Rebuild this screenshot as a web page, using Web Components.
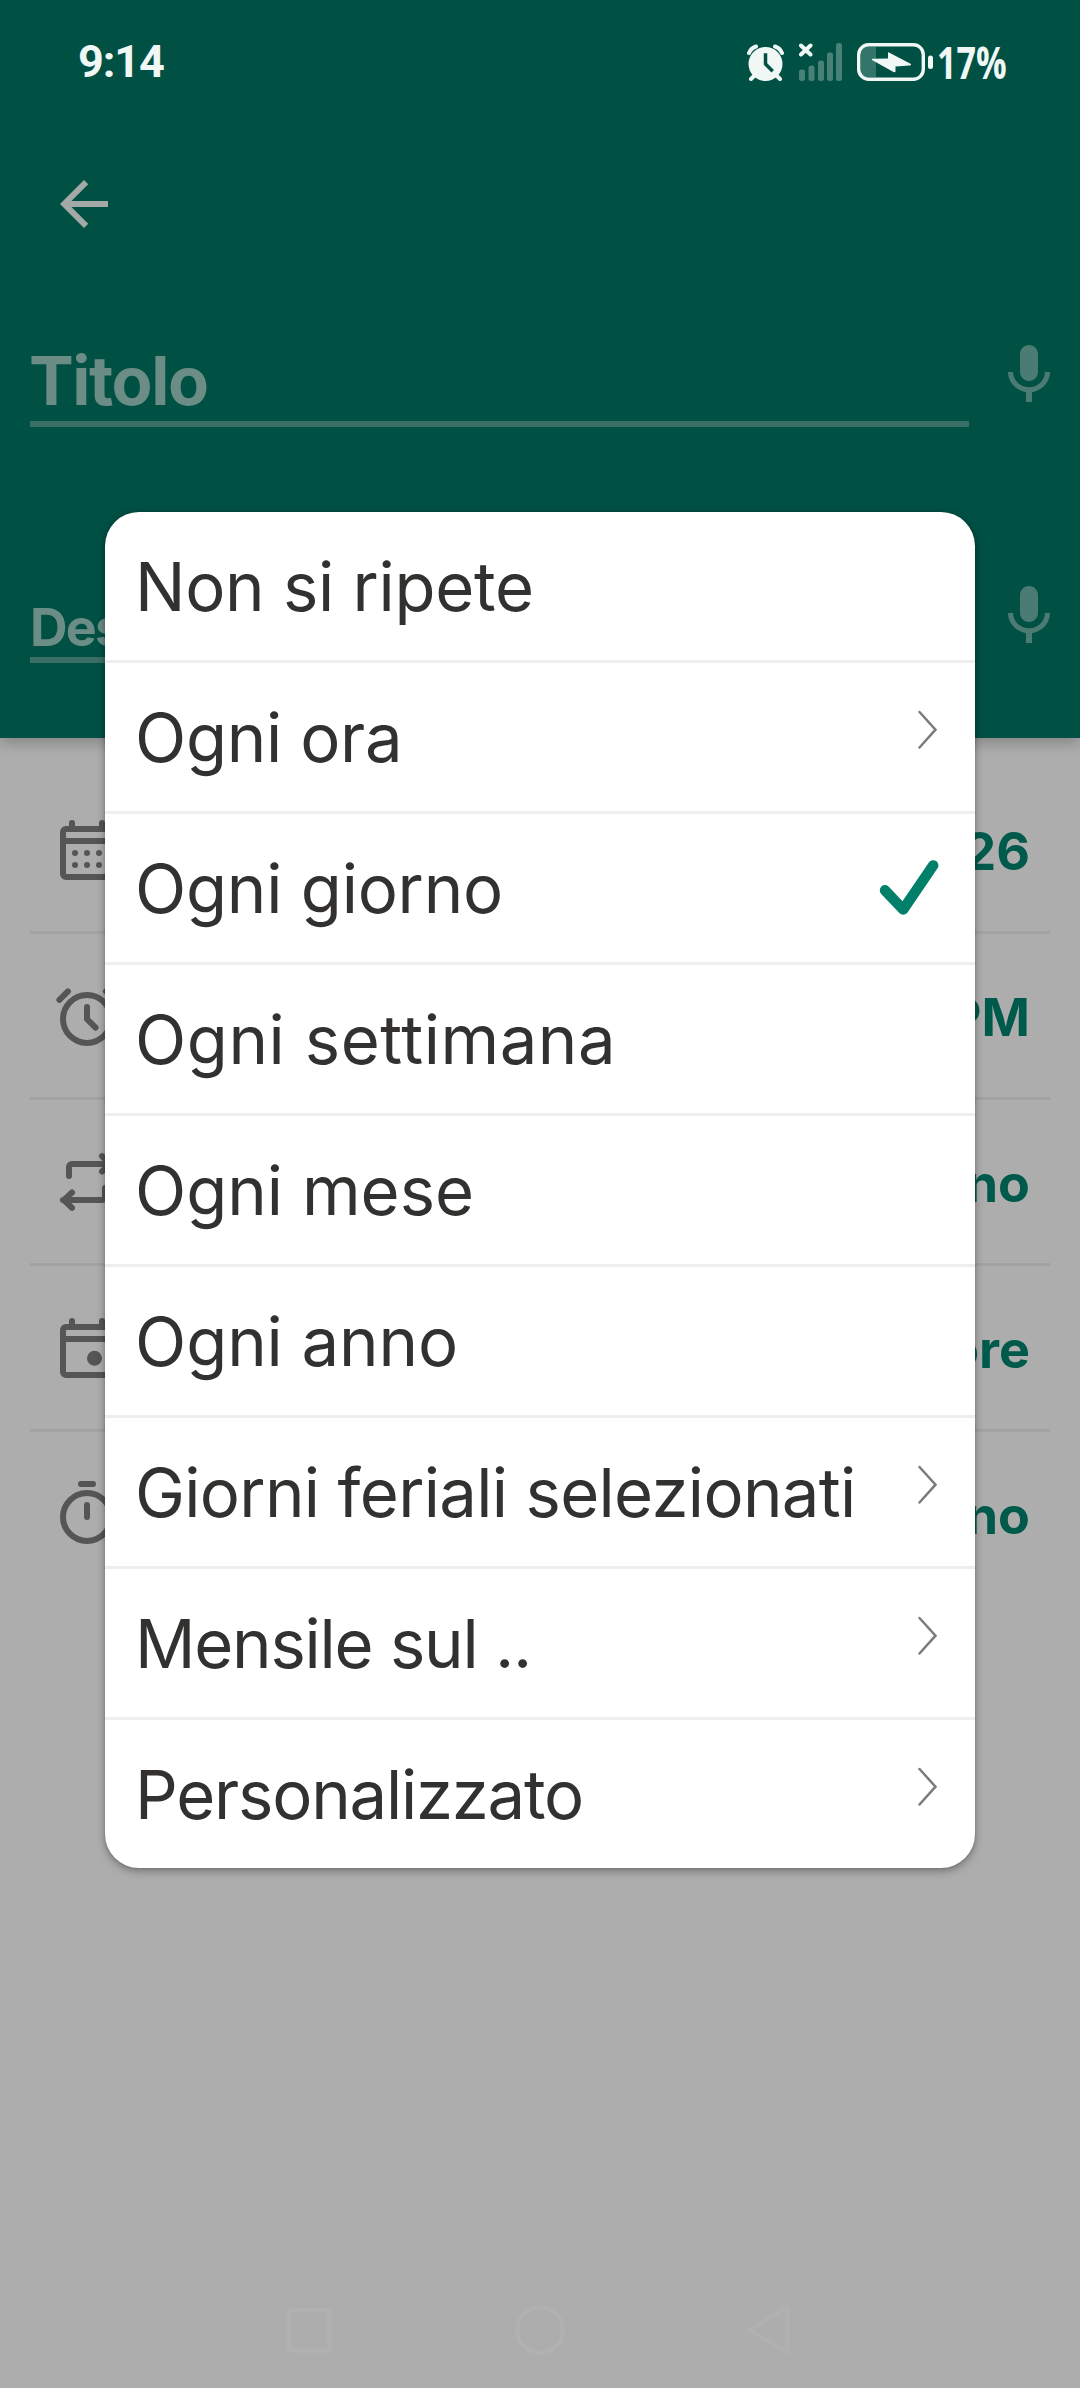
<!DOCTYPE html>
<html lang="it">
<head>
<meta charset="utf-8">
<title>Promemoria</title>
<style>
  html, body { margin: 0; height: 100%; overflow: hidden; }
  body { font-family: Inter, "Open Sans", sans-serif; background: #adadad; }
</style>
</head>
<body>
<reminder-screen>
  <status-bar slot="status" time="9:14" battery="17%"></status-bar>
  <text-field slot="fields" class="title" label="Titolo" ink="176" size="67" gap="30"></text-field>
  <text-field slot="fields" label="Des" ink="90" size="52"></text-field>
  <setting-row icon="calendar">26</setting-row>
  <setting-row icon="alarm">PM</setting-row>
  <setting-row icon="repeat">no</setting-row>
  <setting-row icon="event">ore</setting-row>
  <setting-row icon="timer">no</setting-row>
  <repeat-menu slot="overlay">
    <menu-option ink="391">Non si ripete</menu-option>
    <menu-option ink="260" mark="more">Ogni ora</menu-option>
    <menu-option ink="362" mark="check">Ogni giorno</menu-option>
    <menu-option ink="473">Ogni settimana</menu-option>
    <menu-option ink="333">Ogni mese</menu-option>
    <menu-option ink="317">Ogni anno</menu-option>
    <menu-option ink="715" mark="more">Giorni feriali selezionati</menu-option>
    <menu-option ink="388" mark="more">Mensile sul ..</menu-option>
    <menu-option ink="441" mark="more">Personalizzato</menu-option>
  </repeat-menu>
</reminder-screen>

<script>
const define = (name, render, after) => customElements.define(name, class extends HTMLElement {
  connectedCallback() {
    if (this.shadowRoot) return;
    this.attachShadow({ mode: 'open' }).innerHTML = render(this);
    if (after) after(this);
  }
});
const attr = (el, name) => el.getAttribute(name) || '';

const ICONS = {
  back: '<path d="M20 11H7.83l5.59-5.59L12 4l-8 8 8 8 1.41-1.41L7.83 13H20z" fill="currentColor"/>',
  mic: '<path fill="currentColor" d="M12 14c1.66 0 3-1.34 3-3V5c0-1.66-1.34-3-3-3S9 3.340 9 5v6c0 1.660 1.340 3 3 3zM17.300 11c0 3-2.540 5.100-5.300 5.100S6.700 14 6.700 11H5c0 3.410 2.720 6.230 6 6.720V21h2v-3.280c3.280-.48 6-3.300 6-6.720z"/>',
  calendar: '<rect x="4" y="5" width="16" height="16" rx="1"/><path d="M7 5V3M17 5V3M4 9h16"/><g fill="currentColor" stroke="none"><circle cx="8" cy="13" r="1"/><circle cx="12" cy="13" r="1"/><circle cx="16" cy="13" r="1"/><circle cx="8" cy="17" r="1"/><circle cx="12" cy="17" r="1"/><circle cx="16" cy="17" r="1"/></g>',
  alarm: '<circle cx="12" cy="13" r="8"/><path d="M2.800 6.650l2.850-2.850M21.200 6.650l-2.850-2.850M12 9v4l2.850 2.900"/>',
  repeat: '<path d="M6 10V7a1 1 0 0 1 1-1h13M17 3.400L19.700 6 17 8.500M18 14v3a1 1 0 0 1-1 1H4M7 15.500L4.300 18 7 20.600"/>',
  event: '<rect x="4" y="5" width="16" height="16" rx="1"/><path d="M7 5V3M17 5V3M4 9h16"/><circle cx="14.500" cy="15.400" r="2.500" fill="currentColor" stroke="none"/>',
  timer: '<circle cx="12" cy="13" r="8"/><path d="M10 2h4M12 9v4"/>'
};

define('line-icon', el => `
  <style>
    :host { display: block; width: 72px; height: 72px; flex: none; }
    svg { display: block; }
  </style>
  <svg width="72" height="72" viewBox="0 0 24 24" fill="none"
    ${/back|mic/.test(attr(el, 'name')) ? '' : 'stroke="currentColor" stroke-width="2" stroke-linecap="round"'}>
    ${ICONS[attr(el, 'name')]}
  </svg>`);

define('status-bar', el => `
  <style>
    :host { display: flex; justify-content: space-between; align-items: center; height: 124px;
      padding: 0 74px 0 78px; color: #f0f7f5; font-weight: 700; font-size: 44px; line-height: 60px; }
    .right { display: flex; align-items: center; }
    svg { display: block; }
    .bars { margin-left: 15px; }
    .battery { margin: 0 6px 0 15px; }
    .time { font-family: Roboto, sans-serif; font-size: 45px; }
    .pct { font-family: "Open Sans", sans-serif; font-size: 44px; }
  </style>
  <fit-text class="time" ink="85">${attr(el, 'time')}</fit-text>
  <div class="right">
    <svg width="37" height="37" viewBox="0 0 37 37" fill="none" stroke="currentColor" stroke-linecap="round">
      <circle cx="18.500" cy="20" r="17" fill="currentColor" stroke="none"/>
      <path d="M2 9Q4 4 9 2.500M28 2.500Q33 4 35 9" stroke-width="4"/>
      <path d="M8 31l-4 4M29 31l4 4" stroke-width="4"/>
      <path d="M18.500 11v9l6 6" stroke="#005044" stroke-width="3.500" stroke-linecap="square" stroke-linejoin="round"/>
    </svg>
    <svg class="bars" width="43" height="38" viewBox="0 0 43 38">
      <g fill="#4a8177">
        <rect x="0" y="26.500" width="6" height="11.500" rx="2.500"/><rect x="9.500" y="22.500" width="6" height="15.500" rx="2.500"/>
        <rect x="19" y="17.500" width="6" height="20.500" rx="2.500"/><rect x="28" y="9.500" width="6" height="28.500" rx="2.500"/>
        <rect x="37" y="0" width="6" height="38" rx="2.500"/>
      </g>
      <path d="M2 2.500l9.500 9M11.500 2.500L2 11.500" stroke="currentColor" stroke-width="4" stroke-linecap="round"/>
    </svg>
    <svg class="battery" width="76" height="38" viewBox="0 0 76 38">
      <path d="M4 4h15v30H4z" fill="#34756a"/>
      <rect x="1.700" y="1.700" width="64.600" height="34.600" rx="10" fill="none" stroke="currentColor" stroke-width="3.400"/>
      <path d="M31 9.500Q31.500 9 32.500 9.700L54 21Q54.300 22.500 52.500 22.500L38.500 23.500V28.500Q38 29.500 36.500 29L15 17Q14.500 15.800 16 15.700L31 15.500z" fill="currentColor"/>
      <rect x="71" y="12.500" width="5" height="13.500" rx="2.500" fill="currentColor"/>
    </svg>
    <fit-text class="pct" ink="67.500" squeeze>${attr(el, 'battery')}</fit-text>
  </div>`);

define('text-field', el => `
  <style>
    :host { display: grid; grid-template-columns: 939px 72px; column-gap: 24px; padding-left: 30px; color: #6b8d85; font-weight: 700; }
    .box { display: flex; align-items: flex-end; height: 88px; border-bottom: 6px solid #396f65; font-size: ${attr(el, 'size')}px; }
    fit-text { line-height: 1.2; margin-bottom: ${attr(el, 'gap') ? '0' : '-2px'}; margin-left: ${attr(el, 'gap') ? -1 : 0}px; }
    line-icon { color: #4b7b72; margin-top: ${attr(el, 'gap') ? 6 : 11}px; }
  </style>
  <div class="box"><fit-text ink="${attr(el, 'ink')}">${attr(el, 'label')}</fit-text></div>
  <line-icon name="mic"></line-icon>`);

define('setting-row', el => `
  <style>
    :host { display: flex; align-items: center; justify-content: space-between; box-sizing: border-box;
      height: 166px; padding: 0 20px 0 21px; border-bottom: 3px solid #a2a2a2; }
    :host(:last-of-type) { border-bottom-color: transparent; }
    line-icon { color: #555; }
    span { color: #005a4b; font-size: 52px; font-weight: 700; line-height: 64px; padding-top: 4px; }
  </style>
  <line-icon name="${attr(el, 'icon')}"></line-icon>
  <span><slot></slot></span>`);

define('menu-option', el => `
  <style>
    :host { display: flex; justify-content: space-between; height: 148px; padding: 0 36px 0 30px;
      color: #32312f; font-size: 67px; line-height: 150px; white-space: nowrap; }
    :host(:not(:first-of-type)) { border-top: 3px solid #eeeeee; }
    svg { display: block; flex: none; }
    .more { margin: 46px 0 0; }
    .check { margin: 44px 0 0 0; }
  </style>
  <fit-text ink="${attr(el, 'ink')}">${el.textContent.trim()}</fit-text>
  ${attr(el, 'mark') === 'more' ? `<svg class="more" width="24" height="42" viewBox="0 0 24 42" fill="none" stroke="#7b7b7b" stroke-width="2.500" stroke-linecap="round"><path d="M4.500 3L20.500 20.700 4.500 38.500"/></svg>` : ''}
  ${attr(el, 'mark') === 'check' ? `<svg class="check" width="62" height="60" viewBox="0 0 62 60" fill="none" stroke="#008069" stroke-width="10.500" stroke-linecap="round" stroke-linejoin="round"><path d="M8 32.300L26.200 51.500 56.200 7.400"/></svg>` : ''}`);

define('repeat-menu', () => `
  <style>
    :host { display: flex; flex-direction: column; width: 870px; border-radius: 34px; overflow: hidden;
      background: #fff; box-shadow: 0 3px 9px rgba(0,0,0,.34), 0 0 3px rgba(0,0,0,.16); }
  </style>
  <slot></slot>`);

define('nav-bar', () => `
  <style>
    :host { display: flex; justify-content: center; align-items: center; gap: 180px; height: 116px; color: #b1b1b1; }
    svg { display: block; width: 50px; height: 50px; fill: none; stroke: currentColor; stroke-width: 4.300px; stroke-linejoin: round; }
  </style>
  <svg viewBox="0 0 50 50"><rect x="4" y="5" width="40.500" height="40.500" rx="1"/></svg>
  <svg viewBox="0 0 50 50"><circle cx="25" cy="25" r="22.700"/></svg>
  <svg viewBox="0 0 50 50"><path d="M42.500 2.500v45L4.500 25z"/></svg>`);

define('reminder-screen', () => `
  <style>
    :host { display: block; position: relative; width: 1080px; height: 2388px; overflow: hidden; background: #adadad; }
    .page { display: flex; flex-direction: column; height: 100%; }
    header { display: flex; flex-direction: column; height: 738px; background: #005044;
      box-shadow: 0 4px 14px rgba(0,0,0,.26); }
    .toolbar { display: flex; padding: 44px 48px 0; height: 72px; color: #a2a9a6; }
    .fields { display: flex; flex-direction: column; gap: 142px; padding-top: 93px; }
    .rows { flex: 1; padding: 30px 30px 0; }
    .overlay { position: absolute; left: 105px; top: 512px; }
  </style>
  <div class="page">
    <header>
      <slot name="status"></slot>
      <div class="toolbar"><line-icon name="back"></line-icon></div>
      <div class="fields"><slot name="fields"></slot></div>
    </header>
    <main class="rows"><slot></slot></main>
    <nav-bar></nav-bar>
  </div>
  <div class="overlay"><slot name="overlay"></slot></div>`);

/* Text set to an exact drawn width, by tracking or (with "squeeze") by narrowing the glyphs. */
define('fit-text', () => `
  <style>
    :host { display: block; white-space: nowrap; }
    span { display: block; transform-origin: 0 50%; }
  </style>
  <span><slot></slot></span>`, el => {
    const text = el.textContent, ink = +attr(el, 'ink');
    const span = el.shadowRoot.querySelector('span'), css = getComputedStyle(el);
    const ctx = document.createElement('canvas').getContext('2d');
    ctx.font = `${css.fontWeight} ${css.fontSize} ${css.fontFamily}`;
    const m = ctx.measureText(text), natural = m.actualBoundingBoxLeft + m.actualBoundingBoxRight;
    if (el.hasAttribute('squeeze')) {
      el.style.width = ink + 'px';
      span.style.transform = `scaleX(${ink / natural})`;
      span.style.marginLeft = m.actualBoundingBoxLeft + 'px';
    } else {
      span.style.letterSpacing = (ink - natural) / (text.length - 1) + 'px';
    }
  });
</script>
</body>
</html>
